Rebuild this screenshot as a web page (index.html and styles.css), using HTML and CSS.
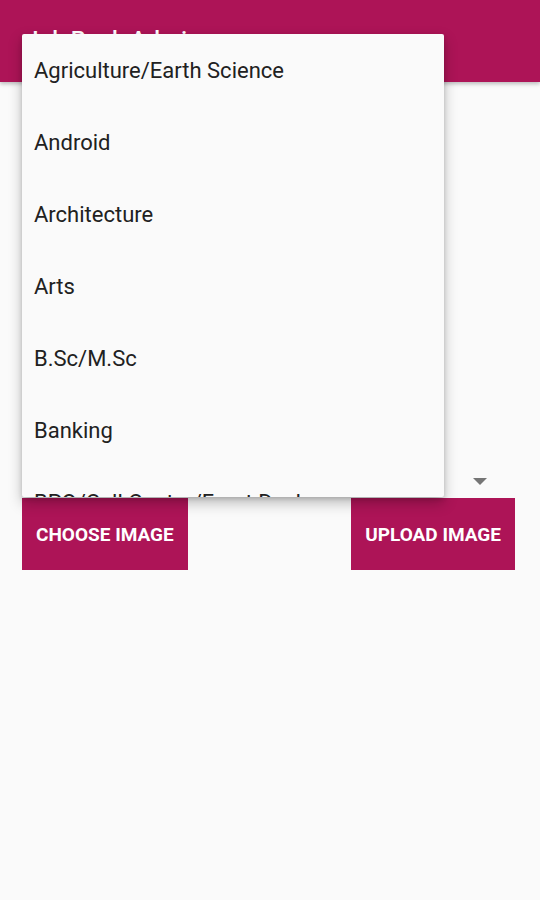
FILE: index.html
```html
<!DOCTYPE html>
<html lang="en">
<head>
    <meta charset="UTF-8">
    <meta name="viewport" content="width=device-width, initial-scale=1.0">
    <title>Ink Bank Admin</title>
    <link rel="stylesheet" href="styles.css">
</head>
<body>

    <div class="app">
        <header class="app-bar">
            <h1 class="app-title">Ink Bank Admin</h1>
        </header>

        <main class="content">
            <!-- image preview area (empty until an image is chosen) -->
            <div class="preview"></div>

            <!-- category spinner -->
            <div class="spinner">
                <span class="spinner-arrow"></span>
            </div>

            <div class="actions">
                <button class="button">Choose Image</button>
                <button class="button">Upload Image</button>
            </div>
        </main>

        <!-- open spinner dropdown -->
        <ul class="dropdown">
            <li>Agriculture/Earth Science</li>
            <li>Android</li>
            <li>Architecture</li>
            <li>Arts</li>
            <li>B.Sc/M.Sc</li>
            <li>Banking</li>
            <li>BPO/Call Center/Front Desk</li>
        </ul>
    </div>

</body>
</html>
```

FILE: styles.css
```css
body {
    margin: 0;
    font-family: Roboto, 'Noto Sans', sans-serif;
    background: #fafafa;
    color: #212121;
}

.app {
    position: relative;
    min-height: 900px;
}

.app-bar {
    height: 82px;
    background-color: #ad1457;
    box-shadow: 0 2px 4px rgba(0, 0, 0, 0.25);
    padding: 0 32px;
    box-sizing: border-box;
}

.app-title {
    margin: 0;
    padding-top: 26px;
    font-size: 24px;
    font-weight: 500;
    color: white;
    line-height: 28px;
}

.content {
    padding: 0 25px 0 22px;
}

.preview {
    height: 378px;
}

.spinner {
    height: 38px;
    display: flex;
    justify-content: flex-end;
    align-items: center;
    padding-right: 28px;
}

.spinner-arrow {
    width: 0;
    height: 0;
    border-left: 7px solid transparent;
    border-right: 7px solid transparent;
    border-top: 7px solid #757575;
    margin-top: 4px;
}

.actions {
    display: flex;
    justify-content: space-between;
}

.button {
    height: 72px;
    padding: 0 14px;
    border: none;
    border-radius: 0;
    background-color: #ad1457;
    color: white;
    font-family: Roboto, sans-serif;
    font-size: 19px;
    font-weight: 700;
    text-transform: uppercase;
    cursor: pointer;
}

/* dropdown drawn over the page */
.dropdown {
    position: absolute;
    top: 34px;
    left: 22px;
    width: 422px;
    height: 463px;
    margin: 0;
    padding: 0;
    list-style: none;
    overflow: hidden;
    background: #fafafa;
    box-shadow: 0 6px 14px rgba(0, 0, 0, 0.25), 0 2px 4px rgba(0, 0, 0, 0.15);
    border-radius: 2px;
}

.dropdown li {
    height: 72px;
    line-height: 74px;
    padding-left: 12px;
    font-size: 22px;
    color: #212121;
}
```
